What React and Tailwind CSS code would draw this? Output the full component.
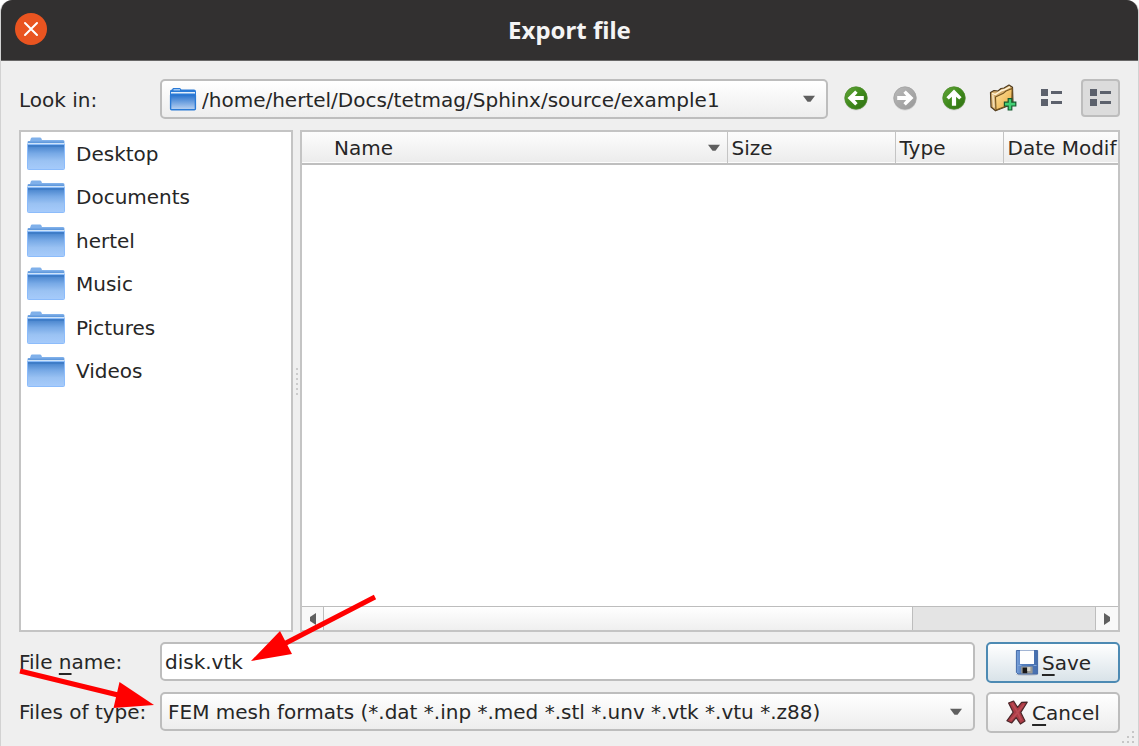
import React from 'react';

const places = ['Desktop', 'Documents', 'hertel', 'Music', 'Pictures', 'Videos'];

function FolderIcon() {
  return (
    <svg width="38" height="34" viewBox="0 0 38 34" aria-hidden="true">
      <defs>
        <linearGradient id="folderFill" x1="0" y1="0" x2="0" y2="1">
          <stop offset="0" stopColor="#3f7dc8" />
          <stop offset="0.35" stopColor="#77a9e6" />
          <stop offset="0.65" stopColor="#9ac2f3" />
          <stop offset="1" stopColor="#a6cbfb" />
        </linearGradient>
      </defs>
      <path d="M3 4 L4 1 Q4.3 .5 5 .5 H13 Q14 .5 14.3 1.2 L15 3 H36 Q37.500 3 37.500 4.500 V10 H.5 V5 Q.5 3.500 3 4Z" fill="#7fb0ea" />
      <rect x="1" y="4.600" width="36" height="1.200" fill="#5a94da" />
      <rect x="1" y="6" width="36" height="1.600" fill="#cfe3f8" />
      <path d="M.5 7.600 H37.500 V31.500 Q37.500 32.500 36.500 32.500 H1.500 Q.5 32.500 .5 31.500Z" fill="url(#folderFill)" stroke="#8cbcfb" strokeWidth="1" />
      <rect x="1" y="8" width="36" height="2" fill="#3f7dc8" />
    </svg>
  );
}

function SmallFolderIcon() {
  return (
    <svg width="28" height="24" viewBox="0 0 28 24" aria-hidden="true">
      <defs>
        <linearGradient id="smallFolderFill" x1="0" y1="0" x2="0" y2="1">
          <stop offset="0" stopColor="#1f6dcc" />
          <stop offset="1" stopColor="#bcd3f2" />
        </linearGradient>
      </defs>
      <path d="M1 4 Q1 2.500 3 2.500 L4 1 H11 L12.500 2.500 H25 Q27 2.500 27 4.500 V8 H1Z" fill="#2a7ad6" />
      <rect x="4.500" y="2" width="6.500" height="1.500" fill="#9cc6f3" />
      <rect x="2" y="5" width="24" height="2" fill="#e2eefb" />
      <rect x="1.600" y="7.200" width="24.800" height="15.600" rx="1" fill="url(#smallFolderFill)" stroke="#2a7ad6" strokeWidth="1.400" />
    </svg>
  );
}

function ArrowBall({ turn, grey }) {
  const fill = grey ? 'url(#ballGrey)' : 'url(#ballGreen)';
  return (
    <svg width="26" height="26" viewBox="0 0 26 26" aria-hidden="true">
      <defs>
        <linearGradient id="ballGreen" x1="0" y1="0" x2="1" y2="1">
          <stop offset="0" stopColor="#64a63a" />
          <stop offset="0.5" stopColor="#3f8a1c" />
          <stop offset="1" stopColor="#2f6f12" />
        </linearGradient>
        <linearGradient id="ballGrey" x1="0" y1="0" x2="1" y2="1">
          <stop offset="0" stopColor="#b9b9b9" />
          <stop offset="1" stopColor="#989898" />
        </linearGradient>
      </defs>
      <ellipse cx="13" cy="14" rx="11.600" ry="11.400" fill="#d4d4d4" />
      <circle cx="13" cy="13" r="11.200" fill={fill} stroke={grey ? '#a2a2a2' : '#4b8a2a'} strokeWidth="0.800" />
      <path
        transform={`rotate(${turn} 13 13)`}
        d="M4.500 13 L12.200 5.400 L14.600 7.800 L11.800 10.900 H20.800 V15.100 H11.800 L14.600 18.200 L12.200 20.600Z"
        fill="#fff"
      />
    </svg>
  );
}

function NewFolderIcon() {
  return (
    <svg width="28" height="28" viewBox="0 0 28 28" aria-hidden="true">
      <defs>
        <linearGradient id="newFolderFill" x1="0" y1="0" x2="1" y2="1">
          <stop offset="0" stopColor="#ffe3a0" />
          <stop offset="1" stopColor="#e8a83c" />
        </linearGradient>
      </defs>
      <path d="M1.500 8.500 L5 6.500 L9 7 L12 4.500 L15 4 L20 1 L23.500 3.200 L24 20 L6.500 26.800 L2 23Z" fill="#d5ad6c" stroke="#4f3b20" strokeWidth="1.200" strokeLinejoin="round" />
      <path d="M3 9.600 L6.500 10.400 L12 6.800 L16 5.500 L21 2.800" fill="none" stroke="#fff1d2" strokeWidth="1.500" />
      <path d="M3.800 11 L5 23.500" stroke="#f1dcb4" strokeWidth="1.800" />
      <path d="M6.500 13 L14 9.600 L17 7 L23.200 4.600 L22.600 20 L7 26Z" fill="url(#newFolderFill)" stroke="#73531f" strokeWidth="1.100" strokeLinejoin="round" />
      <path d="M19.200 14.600 H22.800 V18.200 H26.800 V22 H22.800 V26 H19.200 V22 H15.400 V18.200 H19.200Z" fill="#43cf74" stroke="#14592d" strokeWidth="1.200" />
    </svg>
  );
}

function ListIcon() {
  return (
    <svg width="22" height="18" viewBox="0 0 22 18" fill="#5c616c" aria-hidden="true">
      <rect x="0" y="0" width="7" height="7" />
      <rect x="10" y="2" width="11" height="3" />
      <rect x="0" y="10" width="7" height="7" />
      <rect x="10" y="12" width="11" height="3" />
    </svg>
  );
}

function DownTriangle() {
  return (
    <svg width="14" height="8" viewBox="0 0 14 8" aria-hidden="true">
      <path d="M1 .8 H13 L8.500 6.800 H5.500Z" fill="#5f5f5f" />
    </svg>
  );
}

function SaveIcon() {
  return (
    <svg width="24" height="27" viewBox="0 0 24 27" aria-hidden="true">
      <defs>
        <linearGradient id="diskFill" x1="0" y1="0" x2="1" y2="0">
          <stop offset="0" stopColor="#7ba3dc" />
          <stop offset="0.25" stopColor="#5580c0" />
          <stop offset="1" stopColor="#466fae" />
        </linearGradient>
      </defs>
      <ellipse cx="12" cy="25.400" rx="11" ry="1.400" fill="#c3c8cd" />
      <path d="M1.400 1.500 H22.600 V25 H3 L1.400 23.400Z" fill="url(#diskFill)" stroke="#446ba8" strokeWidth="1" />
      <rect x="5" y="1.500" width="14" height="13.500" fill="#fff" />
      <path d="M3 16.500 H6.500 M18.500 16.500 H21.500" stroke="#83a6d8" />
      <rect x="6.200" y="17.500" width="11.400" height="7" fill="#9a9a95" />
      <rect x="7.600" y="18.600" width="4.600" height="5.600" fill="#171717" />
      <rect x="12.200" y="18" width="3.200" height="4" fill="#d3d0c4" />
    </svg>
  );
}

function CancelIcon() {
  return (
    <svg width="22" height="25" viewBox="0 0 22 25" aria-hidden="true">
      <path
        d="M2.600 3 L7.600 1 L11.600 7.400 L15.600 2.400 L21.200 2.200 L14.800 12.400 L19 21 L14.400 24 L10.200 17.600 L5.600 23 L.9 20.800 L7.200 12.200Z"
        fill="#ab3b45"
        stroke="#4a2629"
        strokeWidth="1.200"
        strokeLinejoin="round"
      />
      <path d="M6 3.400 L11.200 11.600 L15.400 20.400 M18 4.400 L11.400 12.600 L4.600 20.400" fill="none" stroke="#bb4c55" strokeWidth="1.600" />
    </svg>
  );
}

const toolButton = 'flex h-[38px] w-[39px] shrink-0 items-center justify-center rounded';
const headCell = 'border-r border-[#c4c4c4] px-1 text-left font-normal';
const mnemonic = 'underline decoration-2 underline-offset-4';

export default function App() {
  return (
    <div className="bg-white font-['DejaVu_Sans',sans-serif] text-xl leading-6 text-[#262626]">
      <main className="flex min-h-screen flex-col overflow-hidden rounded-t-xl border-x border-[#d2d2d2] bg-[#efefef]">
        <header className="grid h-[61px] shrink-0 grid-cols-[80px_1fr_80px] items-center border-b border-[#686767] bg-[#323030]">
          <button aria-label="Close" className="mb-[2px] ml-[14px] flex h-8 w-8 items-center justify-center rounded-full bg-[#e95420]">
            <svg width="16" height="16" viewBox="0 0 16 16" aria-hidden="true">
              <path d="M2 2 L14 14 M14 2 L2 14" stroke="#fff" strokeWidth="2" strokeLinecap="round" />
            </svg>
          </button>
          <h1 className="text-center font-['Noto_Sans',sans-serif] text-2xl font-bold text-[#f4f4f4]">Export file</h1>
        </header>

        <div className="flex flex-1 flex-col pt-[18px] pr-[18px] pb-[13px] pl-[18px]">
          <div className="flex items-start">
            <label htmlFor="look" className="flex h-[42px] w-[141px] shrink-0 items-center">Look in:</label>
            <div className="relative min-w-0 flex-1">
              <select id="look" className="block h-10 w-full appearance-none rounded-[5px] border-2 border-[#bdbdbd] bg-linear-to-b from-white to-[#ededed] pt-[2px] pr-10 pl-10">
                <option>/home/hertel/Docs/tetmag/Sphinx/source/example1</option>
              </select>
              <span className="pointer-events-none absolute inset-y-0 left-[9px] flex items-center"><SmallFolderIcon /></span>
              <span className="pointer-events-none absolute inset-y-0 right-3 flex items-center"><DownTriangle /></span>
            </div>
            <div className="ml-2 flex gap-[10px]">
              <button aria-label="Back" className={toolButton}><ArrowBall turn={0} /></button>
              <button aria-label="Forward" disabled className={toolButton}><ArrowBall turn={180} grey /></button>
              <button aria-label="Parent directory" className={toolButton}><ArrowBall turn={90} /></button>
              <button aria-label="Create new folder" className={toolButton}><NewFolderIcon /></button>
              <button aria-label="List view" className={toolButton}><ListIcon /></button>
              <button aria-label="Detail view" aria-pressed="true" className="flex h-[38px] w-[39px] shrink-0 items-center justify-center rounded border-2 border-[#bdbdbd] bg-[#dcdcdc]"><ListIcon /></button>
            </div>
          </div>

          <div className="mt-[9px] flex min-h-0 flex-1">
            <nav aria-label="Places" className="w-[274px] shrink-0 border-2 border-[#c4c4c4] bg-white">
              <ul className="flex h-[261px] flex-col">
                {places.map((place) => (
                  <li key={place} className="flex flex-1">
                    <a href="#" className="flex w-full items-center gap-[11px] pl-[6px]">
                      <FolderIcon />
                      {place}
                    </a>
                  </li>
                ))}
              </ul>
            </nav>
            <div className="flex w-[7px] shrink-0 flex-col items-center justify-center gap-[3px]">
              {[0, 1, 2, 3, 4, 5].map((dot) => (
                <span key={dot} className="h-[2px] w-[2px] bg-[#cbcbcb]" />
              ))}
            </div>
            <section className="flex min-w-0 flex-1 flex-col border-2 border-[#c4c4c4] bg-white">
              <table className="w-full table-fixed border-collapse">
                <colgroup>
                  <col className="w-[425px]" />
                  <col className="w-[168px]" />
                  <col className="w-[108px]" />
                  <col />
                </colgroup>
                <thead>
                  <tr className="h-8 border-b-2 border-[#bfbfbf] bg-linear-to-b from-[#fdfdfd] to-[#ececec]">
                    <th className="border-r border-[#c4c4c4] pr-[6px] pl-8 text-left font-normal">
                      <span className="flex items-center justify-between">Name<DownTriangle /></span>
                    </th>
                    <th className={headCell}>Size</th>
                    <th className={headCell}>Type</th>
                    <th className="pl-1 text-left font-normal whitespace-nowrap">Date Modif</th>
                  </tr>
                </thead>
              </table>
              <div className="flex-1" />
              <div className="flex h-6 border-t border-[#bdbdbd] bg-[#e4e4e4]">
                <button aria-label="Scroll left" className="flex w-[22px] items-center justify-center border-r border-[#bdbdbd] bg-[#f8f8f8]">
                  <svg width="8" height="12" viewBox="0 0 8 12" aria-hidden="true"><path d="M7 0 V12 L1 8 V4Z" fill="#5f5f5f" /></svg>
                </button>
                <div className="flex min-w-0 flex-1">
                  <div className="flex-[42] border-r border-[#bdbdbd] bg-linear-to-b from-white to-[#efefef]" />
                  <div className="flex-[13]" />
                </div>
                <button aria-label="Scroll right" className="flex w-[23px] items-center justify-center border-l border-[#bdbdbd] bg-[#f8f8f8]">
                  <svg width="8" height="12" viewBox="0 0 8 12" aria-hidden="true"><path d="M1 0 V12 L7 8 V4Z" fill="#5f5f5f" /></svg>
                </button>
              </div>
            </section>
          </div>

          <form className="relative mt-[10px] grid grid-cols-[141px_1fr_145px] gap-y-[9px]" onSubmit={(e) => e.preventDefault()}>
            <label htmlFor="filename" className="flex h-10 items-center whitespace-pre">File <span className={mnemonic}>n</span>ame:</label>
            <input id="filename" defaultValue="disk.vtk" className="h-[39px] min-w-0 rounded-[5px] border-2 border-[#bdbdbd] bg-white px-[3px]" />
            <button type="submit" className="ml-[11px] flex h-[41px] items-center justify-center gap-[3px] rounded-[5px] border-2 border-[#4d8ab3] bg-linear-to-b from-white to-[#d9e3e9]">
              <SaveIcon />
              <span><span className={mnemonic}>S</span>ave</span>
            </button>
            <label htmlFor="filetype" className="flex h-10 items-center">Files of type:</label>
            <div className="relative">
              <select id="filetype" className="block h-[39px] w-full appearance-none rounded-[5px] border-2 border-[#bdbdbd] bg-linear-to-b from-white to-[#ededed] pr-10 pl-[6px]">
                <option>FEM mesh formats (*.dat *.inp *.med *.stl *.unv *.vtk *.vtu *.z88)</option>
              </select>
              <span className="pointer-events-none absolute top-0 right-3 flex h-[39px] items-center"><DownTriangle /></span>
            </div>
            <button type="button" className="ml-[11px] flex h-[41px] items-center justify-center gap-1 rounded-[5px] border-2 border-[#bdbdbd] bg-linear-to-b from-white to-[#ededed]">
              <CancelIcon />
              <span><span className={mnemonic}>C</span>ancel</span>
            </button>
            <svg className="pointer-events-none absolute -top-[52px] left-0" width="370" height="130" viewBox="19 590 370 130" aria-hidden="true">
              <path d="M375 597 L284 644 M20 671 L118 695" stroke="#f00" strokeWidth="5" />
              <path d="M251 661 L280 631 L292 654Z M154 705 L119.500 682 L113.500 708Z" fill="#f00" />
            </svg>
          </form>
        </div>
        <svg className="pointer-events-none absolute right-1 bottom-0" width="14" height="16" viewBox="0 0 14 16" fill="#c6c6c6" aria-hidden="true">
          <path d="M11 1h2v2h-2z M6 6h2v2h-2z M11 6h2v2h-2z M1 11h2v2h-2z M6 11h2v2h-2z M11 11h2v2h-2z" />
        </svg>
      </main>
    </div>
  );
}
